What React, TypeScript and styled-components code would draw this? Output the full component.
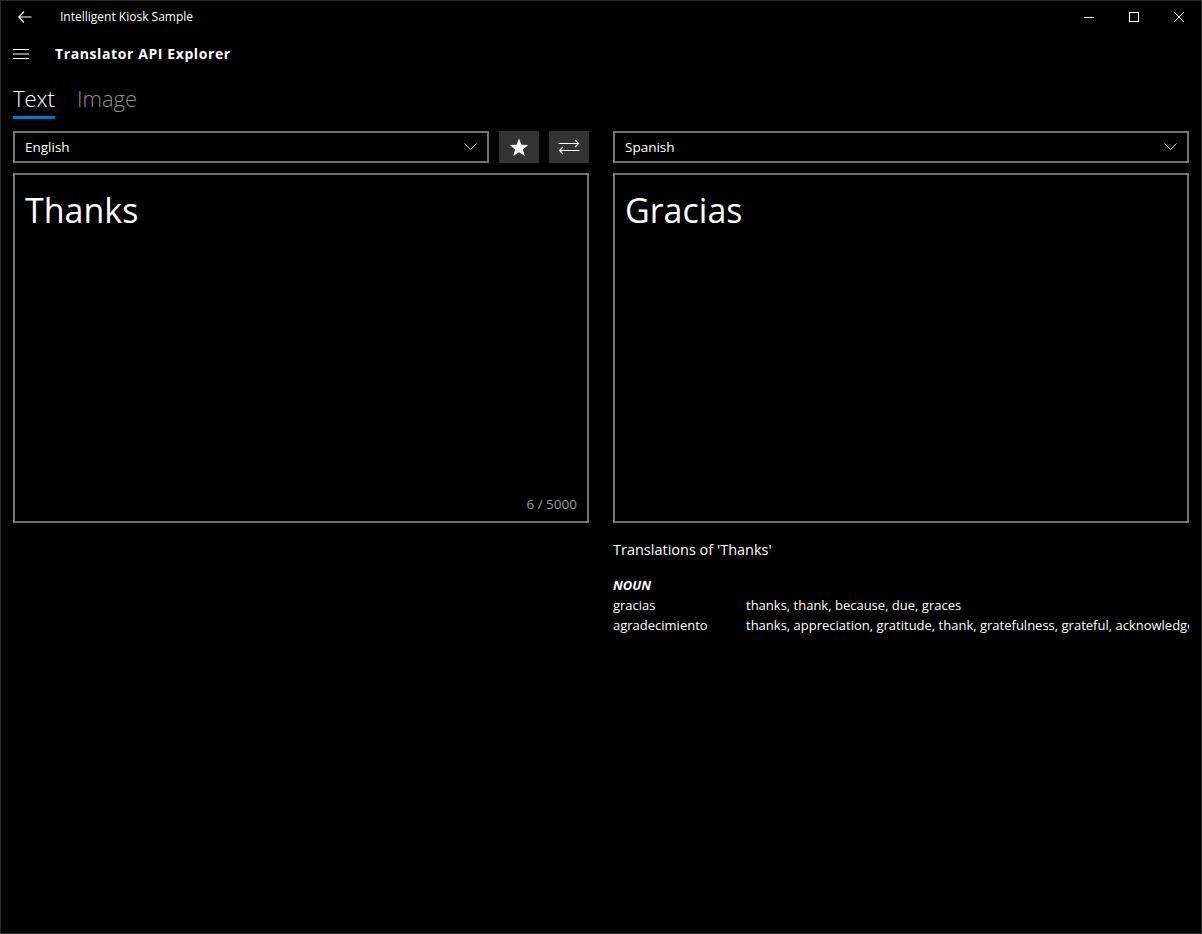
import styled, { createGlobalStyle } from "styled-components";

const Global = createGlobalStyle`
  html, body {
    margin: 0;
    background: #000;
  }
  body {
    font-family: "Open Sans", "Noto Sans", sans-serif;
    color: #fff;
  }
`;

const Window = styled.div`
  width: 1202px;
  height: 934px;
  box-sizing: border-box;
  border: 1px solid #2b2b2b;
  background: #000;
  display: flex;
  flex-direction: column;
  overflow: hidden;
`;

const TitleBar = styled.div`
  height: 31px;
  display: flex;
  align-items: center;
`;

const BackButton = styled.div`
  width: 48px;
  height: 31px;
  display: flex;
  align-items: center;
  justify-content: center;
`;

const WindowTitle = styled.div`
  font-size: 12px;
  margin-left: 11px;
  flex: 1;
`;

const Controls = styled.div`
  display: flex;
`;

const ControlButton = styled.div`
  width: 45px;
  height: 31px;
  display: flex;
  align-items: center;
  justify-content: center;
`;

const AppHeader = styled.div`
  height: 43px;
  display: flex;
  align-items: center;
  padding-left: 12px;
`;

const AppTitle = styled.div`
  font-size: 14px;
  font-weight: 700;
  letter-spacing: 0.6px;
  margin-left: 26px;
`;

const Tabs = styled.div`
  display: flex;
  gap: 22px;
  padding-left: 12px;
  height: 56px;
`;

const Tab = styled.div<{ $active?: boolean }>`
  font-size: 22px;
  font-weight: 300;
  color: ${(p) => (p.$active ? "#fff" : "#8a8a8a")};
  padding-top: 10px;
  line-height: 26px;
  height: 31px;
  border-bottom: 3px solid ${(p) => (p.$active ? "#0078d7" : "transparent")};
`;

const Columns = styled.div`
  display: grid;
  grid-template-columns: 576px 576px;
  gap: 24px;
  padding-left: 12px;
`;

const Column = styled.div`
  display: flex;
  flex-direction: column;
`;

const Toolbar = styled.div`
  display: flex;
  gap: 10px;
  height: 32px;
  margin-bottom: 10px;
`;

const Combo = styled.div`
  flex: 1;
  box-sizing: border-box;
  border: 2px solid #727272;
  display: flex;
  align-items: center;
  justify-content: space-between;
  padding: 0 10px;
  font-size: 13.5px;
`;

const IconButton = styled.div`
  width: 40px;
  height: 32px;
  background: #333;
  display: flex;
  align-items: center;
  justify-content: center;
`;

const TextBox = styled.div`
  height: 350px;
  box-sizing: border-box;
  border: 2px solid #727272;
  padding: 10px 10px;
  display: flex;
  flex-direction: column;
  justify-content: space-between;
`;

const BigText = styled.div`
  font-size: 34px;
  line-height: 50px;
`;

const Counter = styled.div`
  align-self: flex-end;
  font-size: 13.5px;
  color: #9a9a9a;
  margin-bottom: -2px;
`;

const Lookup = styled.div`
  padding-top: 17px;
  font-size: 13px;
`;

const LookupTitle = styled.div`
  font-size: 14.5px;
  margin-bottom: 16px;
`;

const PartOfSpeech = styled.div`
  font-weight: 700;
  font-style: italic;
  line-height: 20px;
`;

const Row = styled.div`
  display: grid;
  grid-template-columns: 133px 1fr;
  line-height: 20px;
  white-space: nowrap;
  overflow: hidden;
`;

const Chevron = () => (
  <svg width="13" height="8" viewBox="0 0 13 8">
    <path d="M0.5 0.5 L6.5 6.5 L12.5 0.5" stroke="#cfcfcf" strokeWidth="1" fill="none" />
  </svg>
);

const translations = [
  { word: "gracias", meanings: "thanks, thank, because, due, graces" },
  {
    word: "agradecimiento",
    meanings:
      "thanks, appreciation, gratitude, thank, gratefulness, grateful, acknowledgement",
  },
];

export default function App() {
  return (
    <>
      <Global />
      <Window>
        <TitleBar>
          <BackButton>
            <svg width="14" height="12" viewBox="0 0 14 12">
              <path d="M6 0.5 L0.8 6 L6 11.5 M0.8 6 H13.5" stroke="#fff" strokeWidth="1.1" fill="none" />
            </svg>
          </BackButton>
          <WindowTitle>Intelligent Kiosk Sample</WindowTitle>
          <Controls>
            <ControlButton>
              <svg width="10" height="10" viewBox="0 0 10 10">
                <path d="M0 5.5 H10" stroke="#fff" strokeWidth="1" />
              </svg>
            </ControlButton>
            <ControlButton>
              <svg width="10" height="10" viewBox="0 0 10 10">
                <rect x="0.5" y="0.5" width="9" height="9" stroke="#fff" strokeWidth="1" fill="none" />
              </svg>
            </ControlButton>
            <ControlButton>
              <svg width="10" height="10" viewBox="0 0 10 10">
                <path d="M0 0 L10 10 M10 0 L0 10" stroke="#fff" strokeWidth="1" />
              </svg>
            </ControlButton>
          </Controls>
        </TitleBar>

        <AppHeader>
          <svg width="16" height="12" viewBox="0 0 16 12">
            <path d="M0 1.5 H16 M0 6 H16 M0 10.5 H16" stroke="#fff" strokeWidth="1" />
          </svg>
          <AppTitle>Translator API Explorer</AppTitle>
        </AppHeader>

        <Tabs>
          <Tab $active>Text</Tab>
          <Tab>Image</Tab>
        </Tabs>

        <Columns>
          <Column>
            <Toolbar>
              <Combo>
                English
                <Chevron />
              </Combo>
              <IconButton>
                <svg width="20" height="19" viewBox="0 0 24 23">
                  <path
                    d="M12 0.5 L14.9 8.3 L23.2 8.6 L16.7 13.8 L19 21.8 L12 17.2 L5 21.8 L7.3 13.8 L0.8 8.6 L9.1 8.3 Z"
                    fill="#fff"
                  />
                </svg>
              </IconButton>
              <IconButton>
                <svg width="22" height="16" viewBox="0 0 22 16">
                  <path
                    d="M0.5 4.5 H20.5 M17 1 L20.5 4.5 L17 8 M21.5 11.5 H1.5 M5 8 L1.5 11.5 L5 15"
                    stroke="#fff"
                    strokeWidth="1.2"
                    fill="none"
                  />
                </svg>
              </IconButton>
            </Toolbar>
            <TextBox>
              <BigText>Thanks</BigText>
              <Counter>6 / 5000</Counter>
            </TextBox>
          </Column>

          <Column>
            <Toolbar>
              <Combo>
                Spanish
                <Chevron />
              </Combo>
            </Toolbar>
            <TextBox>
              <BigText>Gracias</BigText>
            </TextBox>
            <Lookup>
              <LookupTitle>Translations of 'Thanks'</LookupTitle>
              <PartOfSpeech>NOUN</PartOfSpeech>
              {translations.map((t) => (
                <Row key={t.word}>
                  <span>{t.word}</span>
                  <span>{t.meanings}</span>
                </Row>
              ))}
            </Lookup>
          </Column>
        </Columns>
      </Window>
    </>
  );
}
